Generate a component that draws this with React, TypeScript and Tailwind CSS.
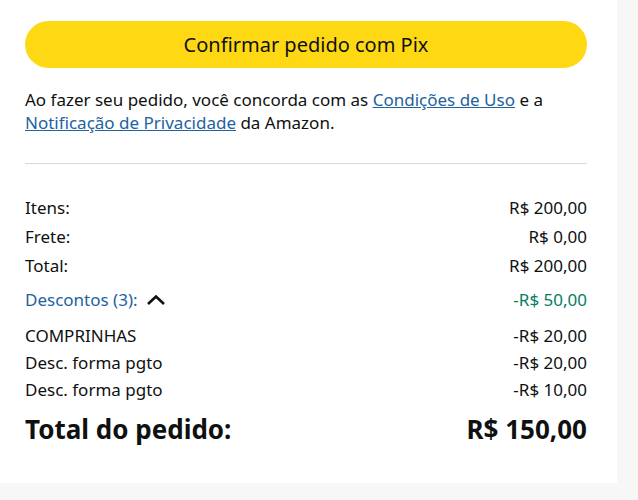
import React from "react";

export default function App() {
  const row = "flex justify-between items-center";
  return (
    <div className="w-[638px] h-[500px] bg-[#f7f7f7] text-[#0f1111]" style={{ fontFamily: '"Noto Sans", sans-serif' }}>
      <div className="w-[617px] h-[483px] bg-white px-[25px] pt-[21px]">
        <div className="w-[562px] h-[47px] rounded-full bg-[#ffd814] flex items-center justify-center text-[20px]">
          Confirmar pedido com Pix
        </div>
        <p className="mt-[20px] text-[17px] leading-[23px] w-[562px]">
          Ao fazer seu pedido, você concorda com as{" "}
          <span className="text-[#2162a1] underline">Condições de Uso</span> e a{" "}
          <span className="text-[#2162a1] underline whitespace-nowrap">Notificação de Privacidade</span> da Amazon.
        </p>
        <div className="mt-[29px] h-px w-[562px] bg-[#d5d9d9]" />
        <div className="w-[562px] text-[17px] mt-[29px]">
          <div className={`${row} h-[29px]`}><span>Itens:</span><span>R$ 200,00</span></div>
          <div className={`${row} h-[29px]`}><span>Frete:</span><span>R$ 0,00</span></div>
          <div className={`${row} h-[29px]`}><span>Total:</span><span>R$ 200,00</span></div>
          <div className={`${row} h-[36px] mt-[2px]`}>
            <span className="flex items-center gap-[8px] text-[#2162a1]">
              Descontos (3):
              <svg width="20" height="12" viewBox="0 0 20 12" fill="none">
                <path d="M2 10 L10 2.5 L18 10" stroke="#0f1111" strokeWidth="2.6" />
              </svg>
            </span>
            <span className="text-[#067d62]">-R$ 50,00</span>
          </div>
          <div className={`${row} h-[27px] mt-[4px]`}><span>COMPRINHAS</span><span>-R$ 20,00</span></div>
          <div className={`${row} h-[27px]`}><span>Desc. forma pgto</span><span>-R$ 20,00</span></div>
          <div className={`${row} h-[27px]`}><span>Desc. forma pgto</span><span>-R$ 10,00</span></div>
          <div className={`${row} h-[36px] mt-[8px] text-[26px] font-bold`}><span>Total do pedido:</span><span>R$ 150,00</span></div>
        </div>
      </div>
    </div>
  );
}
